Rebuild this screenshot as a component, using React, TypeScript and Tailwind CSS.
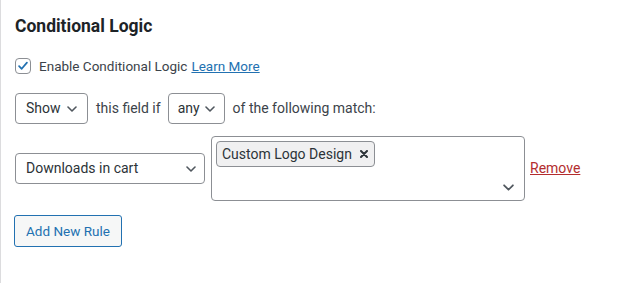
const font = { fontFamily: "Roboto, 'Liberation Sans', sans-serif" };

function Chevron({ className = "" }: { className?: string }) {
  return (
    <svg viewBox="0 0 10 6" className={`shrink-0 ${className}`} fill="none" stroke="#50575e" strokeWidth="1.6" strokeLinecap="round" strokeLinejoin="round">
      <path d="M1 1l4 4 4-4" />
    </svg>
  );
}

function Select({ label, className = "" }: { label: string; className?: string }) {
  return (
    <div className={`flex items-center justify-between h-[31px] border border-[#8c8f94] rounded-[4px] bg-white text-[14px] text-[#2c3338] ${className}`}>
      <span className="whitespace-nowrap">{label}</span>
      <Chevron className="w-[10px] h-[6px] ml-[5px]" />
    </div>
  );
}

export default function App() {
  return (
    <div className="min-h-[283px] bg-white border-l border-[#dcdcde] pl-[14px] pt-[15px] text-[#3c434a]" style={font}>
      {/* Heading */}
      <h3 className="text-[17.5px] font-bold leading-[22px] text-[#1d2327]">Conditional Logic</h3>

      {/* Enable toggle */}
      <label className="flex items-center mt-[19px] text-[13.5px]">
        <span className="w-[16px] h-[16px] border border-[#8c8f94] rounded-[4px] flex items-center justify-center">
          <svg viewBox="0 0 16 16" className="w-[14px] h-[14px]" fill="none" stroke="#2271b1" strokeWidth="2" strokeLinecap="round" strokeLinejoin="round">
            <path d="M3.5 8.2l3 3 6-7" />
          </svg>
        </span>
        <span className="ml-[8px]">Enable Conditional Logic</span>
        <a className="ml-[4px] text-[#2271b1] underline">Learn More</a>
      </label>

      {/* Show / any row */}
      <div className="flex items-center mt-[17px] text-[14px]">
        <Select label="Show" className="w-[73px] pl-[10px] pr-[10px]" />
        <span className="ml-[8px]">this field if</span>
        <Select label="any" className="ml-[7px] pl-[9px] pr-[9px]" />
        <span className="ml-[8px]">of the following match:</span>
      </div>

      {/* Rule row */}
      <div className="flex items-center mt-[12px]">
        <Select label="Downloads in cart" className="w-[190px] pl-[10px] pr-[8px]" />
        <div className="ml-[6px] w-[314px] h-[65px] border border-[#8c8f94] rounded-[4px] bg-white pl-[4px] pt-[4px] pr-[10px] pb-[9px] flex flex-col justify-between">
          <div className="flex">
            <span className="flex items-center h-[26px] border border-[#8c8f94] rounded-[4px] bg-[#f0f0f1] pl-[5px] pr-[6px] text-[14px] text-[#2c3338]">
              Custom Logo Design
              <svg viewBox="0 0 8 8" className="w-[8px] h-[8px] ml-[8px]" stroke="#2c3338" strokeWidth="2" strokeLinecap="round">
                <path d="M1 1l6 6M7 1l-6 6" />
              </svg>
            </span>
          </div>
          <div className="flex justify-end">
            <Chevron className="w-[11px] h-[7px]" />
          </div>
        </div>
        <a className="ml-[5px] text-[14px] text-[#b32d2e] underline">Remove</a>
      </div>

      {/* Add rule */}
      <button className="-ml-[1px] mt-[14px] h-[32px] px-[11px] border border-[#2271b1] rounded-[3px] bg-[#f6f7f7] text-[13.5px] text-[#2271b1]">
        Add New Rule
      </button>
    </div>
  );
}
